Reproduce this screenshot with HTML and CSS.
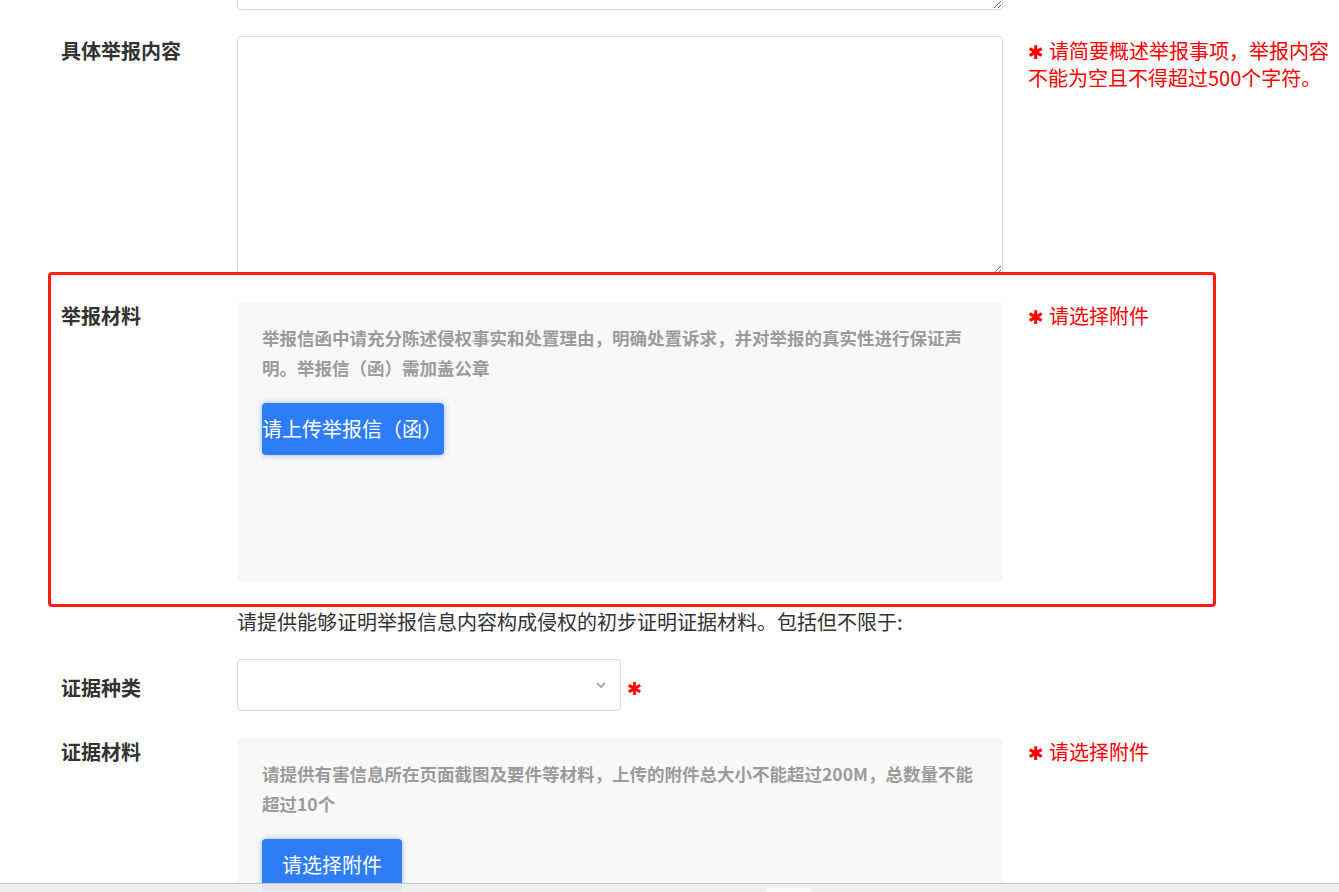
FILE: index.html
```html
<!DOCTYPE html>
<html lang="zh-CN">
<head>
<meta charset="utf-8">
<title>举报材料</title>
<link rel="stylesheet" href="styles.css">
</head>
<body>
<div class="form">
  <div class="row row-top">
    <div class="label"></div>
    <div class="field"><textarea class="ta ta-top"></textarea></div>
  </div>

  <div class="row row-content">
    <div class="label">具体举报内容</div>
    <div class="field"><textarea class="ta ta-content"></textarea></div>
    <div class="hint"><span class="star">✱</span>请简要概述举报事项，举报内容不能为空且不得超过500个字符。</div>
  </div>

  <div class="row row-material">
    <div class="label">举报材料</div>
    <div class="field">
      <div class="upload-box box-material">
        <p class="upload-tip">举报信函中请充分陈述侵权事实和处置理由，明确处置诉求，并对举报的真实性进行保证声明。举报信（函）需加盖公章</p>
        <button class="btn btn-letter" type="button">请上传举报信（函）</button>
      </div>
    </div>
    <div class="hint"><span class="star">✱</span>请选择附件</div>
  </div>

  <p class="note">请提供能够证明举报信息内容构成侵权的初步证明证据材料。包括但不限于:</p>

  <div class="row row-select">
    <div class="label label-mid">证据种类</div>
    <div class="field field-select">
      <div class="select">
        <svg class="chev" width="10" height="6" viewBox="0 0 10 6"><path d="M1 1 L5 5 L9 1" fill="none" stroke="#999" stroke-width="1.6"/></svg>
      </div>
      <span class="star-select">✱</span>
    </div>
  </div>

  <div class="row row-evidence">
    <div class="label">证据材料</div>
    <div class="field">
      <div class="upload-box box-evidence">
        <p class="upload-tip">请提供有害信息所在页面截图及要件等材料，上传的附件总大小不能超过200M，总数量不能超过10个</p>
        <button class="btn btn-attach" type="button">请选择附件</button>
      </div>
    </div>
    <div class="hint"><span class="star">✱</span>请选择附件</div>
  </div>
</div>

<div class="highlight"></div>

<div class="hbar"><div class="hbar-thumb"></div></div>
</body>
</html>
```

FILE: styles.css
```css
html, body {
  margin: 0;
  padding: 0;
  background: #ffffff;
  overflow: hidden;
}

body {
  font-family: "Noto Sans CJK SC", "Noto Sans", sans-serif;
  color: #333333;
  font-size: 20px;
}

.form {
  margin-top: -50px;
  padding-left: 61px;
  display: flex;
  flex-direction: column;
}

.row {
  display: grid;
  grid-template-columns: 176px 766px 336px;
  align-items: start;
}

.row-top { height: 60px; margin-bottom: 26px; }
.row-content { margin-bottom: 26px; }
.row-material { margin-bottom: 0; }
.row-select { margin-bottom: 26px; }

.label {
  font-weight: bold;
  font-size: 20px;
  line-height: 30px;
  color: #333333;
}

.label-mid {
  padding-top: 14px;
}

.hint {
  margin-left: 25px;
  color: #ff0000;
  font-size: 20px;
  line-height: 27px;
  padding-top: 1px;
}

.star {
  display: inline-block;
  width: 21px;
  font-family: "DejaVu Sans", sans-serif;
  font-size: 19px;
  line-height: 20px;
  color: #ff0000;
}

.ta {
  display: block;
  box-sizing: border-box;
  width: 766px;
  margin: 0;
  border: 1px solid #d9d9d9;
  border-radius: 4px;
  background: #ffffff;
  font: inherit;
  outline: none;
}

.ta-top { height: 60px; }
.ta-content { height: 239px; }

.upload-box {
  box-sizing: border-box;
  width: 766px;
  background: #f8f8f8;
  border-radius: 6px;
  padding: 22px 25px 0;
}

.box-material { height: 281px; }
.box-evidence { height: 200px; }

.upload-tip {
  margin: 0 0 20px;
  font-size: 17.5px;
  line-height: 30px;
  font-weight: bold;
  color: #9b9b9b;
}

.btn {
  display: block;
  height: 52px;
  border: none;
  border-radius: 4px;
  background: #2e7cf6;
  color: #ffffff;
  font-family: inherit;
  font-size: 20px;
  line-height: 52px;
  box-shadow: 0 0 6px rgba(46, 124, 246, 0.45);
  cursor: pointer;
}

.btn-letter { padding: 0; width: 182px; text-align: left; }
.btn-attach { padding: 0 20px; }

.note {
  margin: 25px 0 22px 176px;
  font-size: 20px;
  line-height: 30px;
  color: #333333;
}

.field-select {
  display: flex;
  align-items: center;
}

.select {
  box-sizing: border-box;
  width: 384px;
  height: 52px;
  border: 1px solid #d9d9d9;
  border-radius: 4px;
  background: #ffffff;
  display: flex;
  align-items: center;
  justify-content: flex-end;
  padding-right: 14px;
}

.chev { display: block; }

.star-select {
  margin-left: 6px;
  padding-top: 7px;
  font-family: "DejaVu Sans", sans-serif;
  font-size: 18px;
  line-height: 20px;
  color: #ff0000;
}

.highlight {
  position: absolute;
  left: 48px;
  top: 272px;
  width: 1168px;
  height: 335px;
  box-sizing: border-box;
  border: 3px solid #ff1f12;
  border-radius: 4px;
  pointer-events: none;
}

.hbar {
  position: fixed;
  left: 0;
  right: 0;
  bottom: 0;
  height: 8px;
  border-top: 1px solid #c4c4c4;
  background: rgba(238, 238, 238, 0.92);
}

.hbar-thumb {
  position: absolute;
  left: 766px;
  top: 4px;
  width: 45px;
  height: 6px;
  background: #fafafa;
  border-radius: 2px;
}
```
